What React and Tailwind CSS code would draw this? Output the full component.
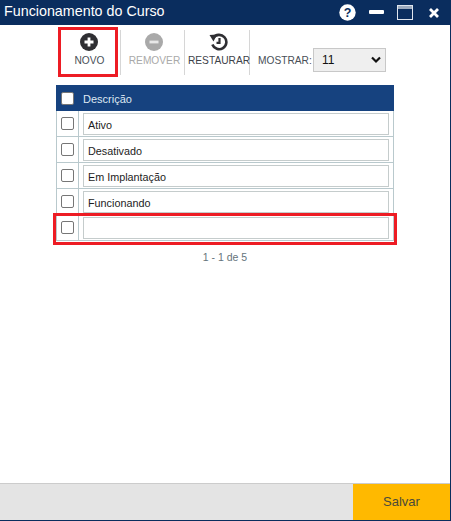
import React from "react";

const rows = ["Ativo", "Desativado", "Em Implantação", "Funcionando", ""];

function Check() {
  return <span className="block w-[13px] h-[13px] rounded-[2px] bg-white border border-[#767676]" />;
}

function Tool({ label, width, color, children, boxed }) {
  return (
    <div className={`relative flex flex-col items-center shrink-0 h-[45px] ${width}`}>
      <div className="h-[18px] mt-[3px] mr-[2px] flex items-center justify-center">{children}</div>
      <span className={`mt-[3px] text-[10.2px] leading-[14px] whitespace-nowrap ${color}`}>{label}</span>
      {boxed && <div className="absolute left-0 right-0 top-[-3px] h-[50px] border-[3px] border-[#ed1c24]" />}
    </div>
  );
}

const Sep = () => <div className="w-px h-[45px] bg-[#d6d6d6] shrink-0" />;

export default function App() {
  return (
    <div className="w-[451px] h-[521px] bg-white flex flex-col border-r border-b border-[#0a2d5e] font-['Liberation_Sans',Arial,sans-serif] overflow-hidden">
      <header className="h-[25px] shrink-0 bg-[#0a2d5e] flex items-center pl-[4px] text-white">
        <h1 className="text-[14.3px] leading-[20px] mb-[4px] flex-1 font-normal">Funcionamento do Curso</h1>
        <div className="flex items-center h-full mr-[11px]">
          <svg width="17" height="17" viewBox="0 0 17 17" className="mr-[13px]">
            <circle cx="8.5" cy="8.5" r="8.2" fill="#fff" />
            <text x="8.5" y="13" textAnchor="middle" fontSize="12.5" fontWeight="700" fill="#0a2d5e" fontFamily="Liberation Sans">?</text>
          </svg>
          <span className="block w-[15px] h-[4px] bg-white mr-[13px] mt-[-2px] rounded-[1px]" />
          <svg width="16" height="15" viewBox="0 0 16 15" className="mr-[16px]">
            <rect x="0.5" y="0.5" width="15" height="14" fill="none" stroke="#dfe5ee" />
            <rect x="1" y="1" width="14" height="3" fill="#fff" opacity="0.6" />
          </svg>
          <svg width="10" height="10" viewBox="0 0 10 10">
            <path d="M1 1 L9 9 M9 1 L1 9" stroke="#fff" strokeWidth="2.8" />
          </svg>
        </div>
      </header>

      <main className="flex-1 flex flex-col">
        <div className="flex items-start h-[45px] mt-[5px] ml-[58px]">
          <Tool label="NOVO" width="w-[60px] pl-[3px]" color="text-[#4a4f57]" boxed>
            <svg width="18" height="18" viewBox="0 0 18 18">
              <circle cx="9" cy="9" r="9" fill="#2f2f33" />
              <path d="M9 4.5 V13.5 M4.5 9 H13.5" stroke="#fff" strokeWidth="2.8" />
            </svg>
          </Tool>
          <div className="w-[2px] shrink-0" />
          <Sep />
          <Tool label="REMOVER" width="w-[63px] pl-[4px]" color="text-[#a9a9a9]">
            <svg width="18" height="18" viewBox="0 0 18 18">
              <circle cx="9" cy="9" r="9" fill="#a9a9a9" />
              <path d="M4.5 9 H13.5" stroke="#e8e8e8" strokeWidth="2.8" />
            </svg>
          </Tool>
          <Sep />
          <Tool label="RESTAURAR" width="w-[64px] pl-[4px]" color="text-[#3d4249]">
            <svg width="19" height="18" viewBox="0 0 19 18" fill="none">
              <path d="M4.2 5 A7.2 7.2 0 1 1 3.4 11.5" stroke="#2f2f33" strokeWidth="2.6" />
              <path d="M0.5 2 L8 1.5 L4.5 8.5 Z" fill="#2f2f33" />
              <path d="M10.5 5 V9.8 H7.5" stroke="#2f2f33" strokeWidth="2.2" />
            </svg>
          </Tool>
          <Sep />
          <div className="flex items-center h-[24px] mt-[18px] ml-[8px]">
            <span className="text-[10.2px] pt-[1px] text-[#4a4f57] w-[55px] whitespace-nowrap">MOSTRAR:</span>
            <div className="w-[73px] h-[24px] bg-[#efefef] border border-[#c8c8c8] flex items-center justify-between pl-[8px] pr-[3px] text-[12px] text-[#111]">
              <span>11</span>
              <svg width="12" height="8" viewBox="0 0 12 8" fill="none">
                <path d="M2 1.5 L6 5.5 L10 1.5" stroke="#111" strokeWidth="2.2" />
              </svg>
            </div>
          </div>
        </div>

        <div className="ml-[56px] w-[338px] mt-[10px]">
          <div className="h-[26px] bg-[#16427f] flex items-center">
            <div className="w-[23px] flex justify-center"><Check /></div>
            <span className="ml-[4px] text-[11px] text-[#dfe8f2] pt-[2px]">Descrição</span>
          </div>
          {rows.map((r, i) => (
            <div key={i} className="relative flex h-[26px] border-b border-x border-[#b9c9cd]">
              <div className="w-[22px] shrink-0 flex items-center justify-center border-r border-[#b9c9cd]">
                <Check />
              </div>
              <div className="flex-1 pl-[4px] pr-[4px] pt-[2px]">
                <div className="h-[22px] border border-[#c5cccc] bg-white flex items-center pl-[4px] pt-[2px] text-[10.8px] text-[#1c1c1c]">
                  {r}
                </div>
              </div>
              {i === 4 && <div className="absolute left-[-4px] right-[-4px] top-[-2px] h-[32px] border-[3px] border-[#ed1c24]" />}
            </div>
          ))}
          <p className="mt-[10px] text-center text-[10.5px] leading-[13px] text-[#65737b]">1 - 1 de 5</p>
        </div>
      </main>

      <footer className="h-[37px] shrink-0 bg-[#e4e4e4] border-t border-[#cccccc] flex justify-end">
        <button className="w-[97px] h-full bg-[#ffb900] text-[13px] text-[#4a4a3a]">Salvar</button>
      </footer>
    </div>
  );
}
